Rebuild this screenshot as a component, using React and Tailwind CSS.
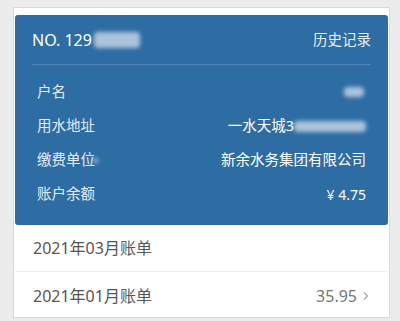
import React from "react";

const font = { fontFamily: '"Noto Sans", "Noto Sans CJK SC", sans-serif' };

function Blur({ w, h = 12, className = "" }) {
  return (
    <span
      className={`inline-block rounded-sm bg-white/60 blur-[2px] ${className}`}
      style={{ width: w, height: h }}
    />
  );
}

function Row({ label, children, labelExtra }) {
  return (
    <div className="flex h-[34px] items-center justify-between pl-[22px] pr-[22px]">
      <div className="flex items-center text-[14.5px] text-[#e3ecf4]">
        {label}
        {labelExtra}
      </div>
      <div className="flex items-center text-[14.5px] text-white">{children}</div>
    </div>
  );
}

export default function App() {
  return (
    <div className="h-[321px] w-[400px] overflow-hidden bg-[#ececec] pt-[7px]" style={font}>
      <div className="ml-[13px] h-[311px] w-[377px] border border-[#d9d9d9] bg-white pt-[7px]">
        <div className="mx-px h-[210px] rounded-[3px] bg-[#2e6ca4]">
          <div className="mx-[17px] flex h-[50px] items-center justify-between border-b border-[#4f85b6]">
            <div className="flex items-center text-[16px] text-white">
              NO. 129
              <Blur w={46} h={16} className="ml-[2px] bg-white/50" />
            </div>
            <div className="text-[14.5px] text-[#e8eef5]">历史记录</div>
          </div>
          <div className="pt-[10px]">
            <Row label="户名">
              <Blur w={20} h={10} className="mr-[2px]" />
            </Row>
            <Row label="用水地址">
              一水天城3
              <Blur w={72} h={11} className="bg-white/45" />
            </Row>
            <Row label="缴费单位" labelExtra={<Blur w={5} h={5} className="ml-[-2px] bg-white" />}>
              新余水务集团有限公司
            </Row>
            <Row label="账户余额">
              <span className="text-[14px]">¥ 4.75</span>
            </Row>
          </div>
        </div>
        <div className="mx-px">
          <div className="flex h-[47px] items-center border-b border-[#f0f0f0] pl-[18px] text-[16px] text-[#555]">
            2021年03月账单
          </div>
          <div className="flex h-[48px] items-center justify-between pl-[18px] pr-[18px] text-[16px] text-[#555]">
            <span>2021年01月账单</span>
            <span className="flex items-center text-[#777]">
              35.95
              <svg width="8" height="10" viewBox="0 0 8 10" className="ml-[5px]">
                <path d="M2 1.5 L5.5 5 L2 8.5" fill="none" stroke="#aaa" strokeWidth="1.3" />
              </svg>
            </span>
          </div>
        </div>
      </div>
    </div>
  );
}
